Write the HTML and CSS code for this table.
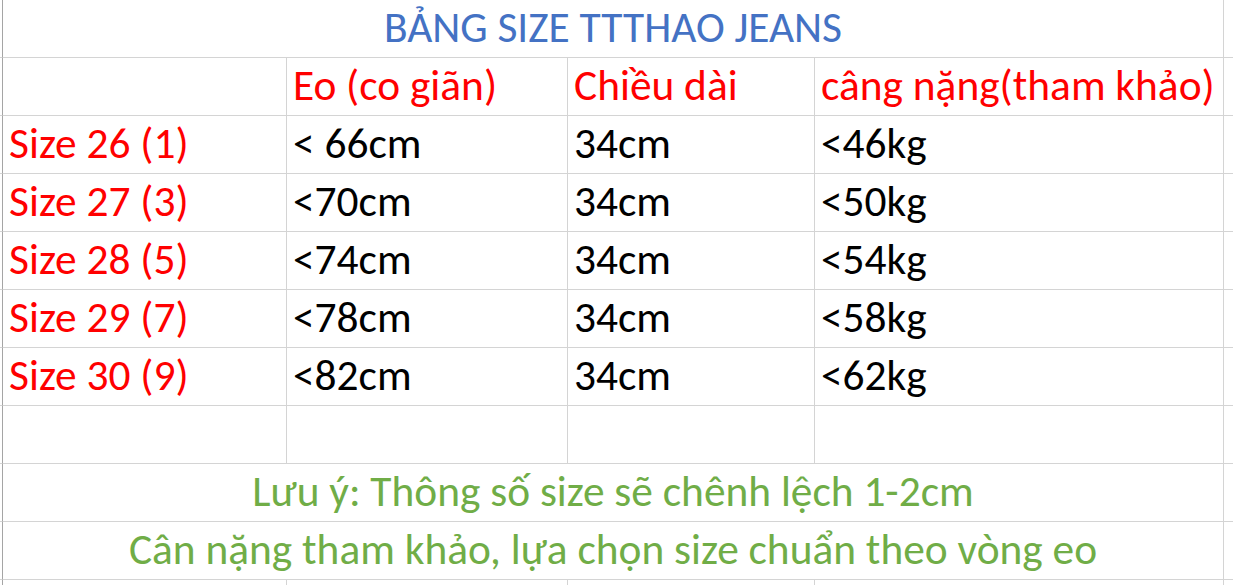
FILE: index.html
```html
<!DOCTYPE html>
<html lang="vi">
<head>
<meta charset="utf-8">
<title>Bảng size TTTHAO JEANS</title>
<link rel="stylesheet" href="styles.css">
</head>
<body>
<div class="sheet">
  <div class="row">
    <div class="gut"></div>
    <div class="cell merged center title">BẢNG SIZE TTTHAO JEANS</div>
    <div class="cell extra"></div>
  </div>
  <div class="row">
    <div class="gut"></div>
    <div class="cell"></div>
    <div class="cell red">Eo (co giãn)</div>
    <div class="cell red">Chiều dài</div>
    <div class="cell red">câng nặng(tham khảo)</div>
    <div class="cell extra"></div>
  </div>
  <div class="row">
    <div class="gut"></div>
    <div class="cell red">Size 26 (1)</div>
    <div class="cell">&lt; 66cm</div>
    <div class="cell">34cm</div>
    <div class="cell">&lt;46kg</div>
    <div class="cell extra"></div>
  </div>
  <div class="row">
    <div class="gut"></div>
    <div class="cell red">Size 27 (3)</div>
    <div class="cell">&lt;70cm</div>
    <div class="cell">34cm</div>
    <div class="cell">&lt;50kg</div>
    <div class="cell extra"></div>
  </div>
  <div class="row">
    <div class="gut"></div>
    <div class="cell red">Size 28 (5)</div>
    <div class="cell">&lt;74cm</div>
    <div class="cell">34cm</div>
    <div class="cell">&lt;54kg</div>
    <div class="cell extra"></div>
  </div>
  <div class="row">
    <div class="gut"></div>
    <div class="cell red">Size 29 (7)</div>
    <div class="cell">&lt;78cm</div>
    <div class="cell">34cm</div>
    <div class="cell">&lt;58kg</div>
    <div class="cell extra"></div>
  </div>
  <div class="row">
    <div class="gut"></div>
    <div class="cell red">Size 30 (9)</div>
    <div class="cell">&lt;82cm</div>
    <div class="cell">34cm</div>
    <div class="cell">&lt;62kg</div>
    <div class="cell extra"></div>
  </div>
  <div class="row">
    <div class="gut"></div>
    <div class="cell"></div>
    <div class="cell"></div>
    <div class="cell"></div>
    <div class="cell"></div>
    <div class="cell extra"></div>
  </div>
  <div class="row">
    <div class="gut"></div>
    <div class="cell merged center green">Lưu ý: Thông số size sẽ chênh lệch 1-2cm</div>
    <div class="cell extra"></div>
  </div>
  <div class="row">
    <div class="gut"></div>
    <div class="cell merged center green">Cân nặng tham khảo, lựa chọn size chuẩn theo vòng eo</div>
    <div class="cell extra"></div>
  </div>
  <div class="row tail">
    <div class="gut"></div>
    <div class="cell"></div>
    <div class="cell"></div>
    <div class="cell"></div>
    <div class="cell"></div>
    <div class="cell extra"></div>
  </div>
</div>
</body>
</html>
```
FILE: styles.css
```css
html, body {
  margin: 0;
  padding: 0;
  background: #ffffff;
}

.sheet {
  width: 1233px;
  font-family: "Carlito", "Calibri", "Lato", sans-serif;
  font-size: 43.4px;
  color: #000000;
}

.row {
  display: grid;
  grid-template-columns: 3px 284px 281px 247px 409px 1fr;
  height: 58px;
}

.gut {
  border-right: 1px solid #a5a5a5;
  border-bottom: 1px solid #d4d4d4;
}

.cell {
  box-sizing: border-box;
  border-right: 1px solid #d4d4d4;
  border-bottom: 1px solid #d4d4d4;
  display: flex;
  align-items: flex-end;
  padding: 0 0 1px 6px;
  line-height: 1.3;
  white-space: nowrap;
}

.merged {
  grid-column: span 4;
}

.center {
  justify-content: center;
  padding-left: 0;
}

.extra {
  border-right: none;
}

.tail {
  height: 6px;
}

.tail .cell,
.tail .gut {
  border-bottom: none;
}

.title {
  color: #4472c4;
}

.red {
  color: #ff0000;
}

.green {
  color: #70ad47;
}
```
